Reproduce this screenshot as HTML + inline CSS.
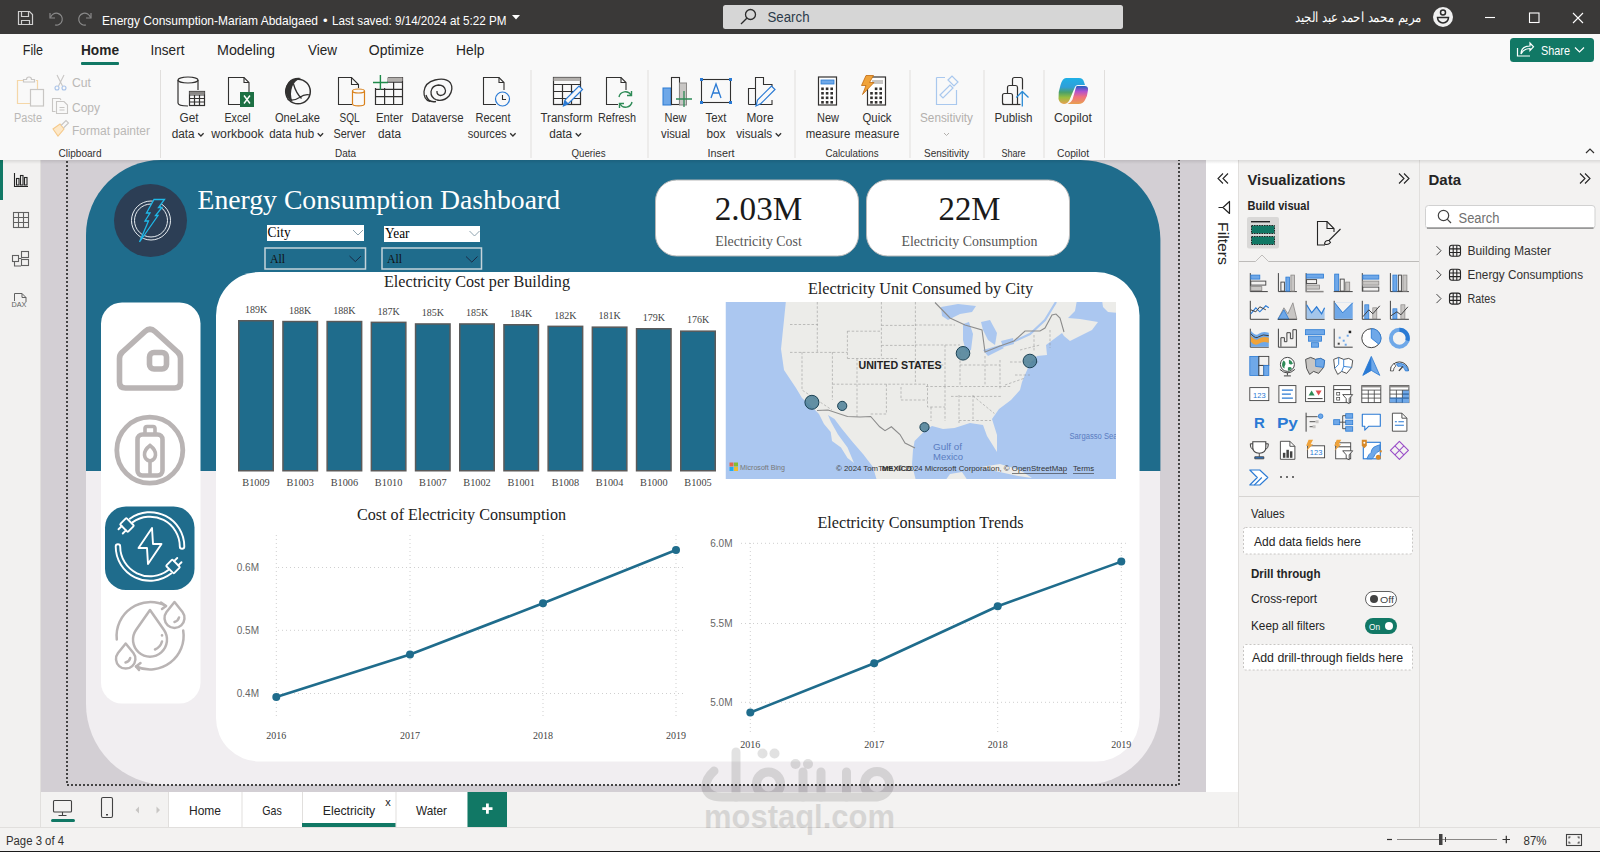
<!DOCTYPE html>
<html><head><meta charset="utf-8"><style>
html,body{margin:0;padding:0;width:1600px;height:852px;overflow:hidden;background:#f3f2f1;}
svg{display:block;}
text{white-space:pre;}
</style></head><body>
<svg width="1600" height="852" viewBox="0 0 1600 852">
<rect x="0" y="0" width="1600" height="852" fill="#f3f2f1"/>
<rect x="0" y="0" width="1600" height="34" fill="#3a3938"/>
<rect x="0" y="34" width="1600" height="126" fill="#f9f9f9"/>
<rect x="0" y="160" width="41" height="667" fill="#f2f1f0"/>
<rect x="40" y="160" width="1" height="667" fill="#e1dfdd"/>
<rect x="0" y="160" width="3" height="40" fill="#117865"/>
<rect x="41" y="160" width="1165" height="632" fill="#d3cfd4"/>
<rect x="1206" y="160" width="32" height="632" fill="#ffffff"/>
<rect x="1238" y="160" width="1" height="667" fill="#e1dfdd"/>
<rect x="1239" y="160" width="180" height="667" fill="#f3f2f1"/>
<rect x="1419" y="160" width="1" height="667" fill="#e1dfdd"/>
<rect x="1420" y="160" width="180" height="667" fill="#f3f2f1"/>
<rect x="41" y="792" width="1197" height="35" fill="#f3f2f1"/>
<rect x="0" y="827" width="1600" height="1" fill="#e1dfdd"/>
<rect x="0" y="828" width="1600" height="23" fill="#f3f2f1"/>
<rect x="0" y="851" width="1600" height="1" fill="#1a1a1a"/>
<path d="M86 300 V704 A81 81 0 0 0 167 785 H1083 A77 77 0 0 0 1160 708 V300 Z" fill="#f1eef1"/>
<path d="M86 471 V235 A75 75 0 0 1 161 160 H1080.4 A80 80 0 0 1 1160.4 240 V471 Z" fill="#1f6c8c"/>
<rect x="101" y="302.5" width="99.5" height="401" rx="21" fill="#ffffff"/>
<rect x="216" y="272" width="923.5" height="489.5" rx="43.5" fill="#ffffff"/>
<circle cx="150.5" cy="220.5" r="36.5" fill="#2c3e55"/>
<text x="197.5" y="208.5" font-size="27.7" fill="#ffffff" text-anchor="start" font-family='"Liberation Serif", serif' font-weight="normal" textLength="362.5" lengthAdjust="spacingAndGlyphs" >Energy Consumption Dashboard</text>
<g fill="none" stroke="#d0d0d0" stroke-width="1.2"><path d="M18.5 11.5 H29.5 L32.5 14.5 V24.5 H18.5 Z"/><path d="M21.5 11.5 V16.5 H28.5 V11.5"/><path d="M21.5 24.5 V20.5 H29.5 V24.5"/></g>
<g fill="none" stroke="#8a8a8a" stroke-width="1.2"><path d="M50 13 V18 H55"/><path d="M50.5 17.5 A6 6 0 1 1 55 25"/><path d="M91 13 V18 H86"/><path d="M90.5 17.5 A6 6 0 1 0 86 25"/></g>
<text x="102" y="24.5" font-size="13" fill="#ffffff" text-anchor="start" font-family='"Liberation Sans", sans-serif' font-weight="normal" textLength="216" lengthAdjust="spacingAndGlyphs" >Energy Consumption-Mariam Abdalgaed</text>
<text x="323" y="24.5" font-size="13" fill="#ffffff" text-anchor="start" font-family='"Liberation Sans", sans-serif' font-weight="normal" >•</text>
<text x="332" y="24.5" font-size="13" fill="#ffffff" text-anchor="start" font-family='"Liberation Sans", sans-serif' font-weight="normal" textLength="174.5" lengthAdjust="spacingAndGlyphs" >Last saved: 9/14/2024 at 5:22 PM</text>
<path d="M512 15 L520 15 L516 19.5 Z" fill="#ffffff"/>
<rect x="723" y="5" width="400" height="24" rx="2.5" fill="#d6d6d6"/>
<g fill="none" stroke="#2b2b2b" stroke-width="1.3"><circle cx="750.5" cy="14.5" r="5"/><path d="M746.8 18.2 L741 24"/></g>
<text x="767.5" y="22" font-size="14" fill="#2c3b4a" text-anchor="start" font-family='"Liberation Sans", sans-serif' font-weight="normal" textLength="42" lengthAdjust="spacingAndGlyphs" >Search</text>
<text x="1295" y="22" font-size="14" fill="#ffffff" font-family='"Liberation Sans", sans-serif' textLength="127" lengthAdjust="spacingAndGlyphs" style="unicode-bidi:plaintext">مريم محمد احمد عبد الجيد</text>
<circle cx="1443" cy="17" r="10" fill="#f0f0f0"/>
<g fill="none" stroke="#2b2b2b" stroke-width="1.5"><circle cx="1443" cy="12.5" r="2.5"/><path d="M1437.5 17.5 H1448.5 A5.5 5.5 0 0 1 1437.5 17.5 Z"/></g>
<g fill="none" stroke="#ffffff" stroke-width="1.1"><path d="M1485 17.5 H1495"/><rect x="1529.5" y="13" width="9.5" height="9.5"/><path d="M1573 13 L1583 23 M1583 13 L1573 23"/></g>
<text x="22.8" y="55.3" font-size="14" fill="#242424" text-anchor="start" font-family='"Liberation Sans", sans-serif' font-weight="normal" textLength="20.2" lengthAdjust="spacingAndGlyphs" >File</text>
<text x="81" y="55.3" font-size="14" fill="#242424" text-anchor="start" font-family='"Liberation Sans", sans-serif' font-weight="bold" textLength="38" lengthAdjust="spacingAndGlyphs" >Home</text>
<text x="150.6" y="55.3" font-size="14" fill="#242424" text-anchor="start" font-family='"Liberation Sans", sans-serif' font-weight="normal" textLength="33.8" lengthAdjust="spacingAndGlyphs" >Insert</text>
<text x="217" y="55.3" font-size="14" fill="#242424" text-anchor="start" font-family='"Liberation Sans", sans-serif' font-weight="normal" textLength="58" lengthAdjust="spacingAndGlyphs" >Modeling</text>
<text x="308" y="55.3" font-size="14" fill="#242424" text-anchor="start" font-family='"Liberation Sans", sans-serif' font-weight="normal" textLength="29" lengthAdjust="spacingAndGlyphs" >View</text>
<text x="368.8" y="55.3" font-size="14" fill="#242424" text-anchor="start" font-family='"Liberation Sans", sans-serif' font-weight="normal" textLength="55.2" lengthAdjust="spacingAndGlyphs" >Optimize</text>
<text x="456" y="55.3" font-size="14" fill="#242424" text-anchor="start" font-family='"Liberation Sans", sans-serif' font-weight="normal" textLength="28.4" lengthAdjust="spacingAndGlyphs" >Help</text>
<rect x="81" y="62" width="38" height="3" rx="1" fill="#117865"/>
<rect x="1510" y="38" width="84" height="24" rx="3.5" fill="#117865"/>
<g fill="none" stroke="#ffffff" stroke-width="1.2"><path d="M1517.5 48 V56 H1530"/><path d="M1521 54 C1521 48 1525 46 1530 46 V43 L1533.5 46.8 L1530 50.5 V48.5 C1526 48.5 1523 50 1521 54 Z"/></g>
<text x="1541" y="55" font-size="13" fill="#ffffff" text-anchor="start" font-family='"Liberation Sans", sans-serif' font-weight="normal" textLength="29" lengthAdjust="spacingAndGlyphs" >Share</text>
<path d="M1575 47.5 L1579.5 52 L1584 47.5" fill="none" stroke="#ffffff" stroke-width="1.2"/>
<rect x="160" y="70" width="1" height="88" fill="#e1dfdd"/>
<rect x="530.5" y="70" width="1" height="88" fill="#e1dfdd"/>
<rect x="647.5" y="70" width="1" height="88" fill="#e1dfdd"/>
<rect x="794.5" y="70" width="1" height="88" fill="#e1dfdd"/>
<rect x="909.5" y="70" width="1" height="88" fill="#e1dfdd"/>
<rect x="983.5" y="70" width="1" height="88" fill="#e1dfdd"/>
<rect x="1043.5" y="70" width="1" height="88" fill="#e1dfdd"/>
<rect x="1104" y="70" width="1" height="88" fill="#e1dfdd"/>
<text x="80" y="157" font-size="11" fill="#323130" text-anchor="middle" font-family='"Liberation Sans", sans-serif' font-weight="normal" textLength="43" lengthAdjust="spacingAndGlyphs" >Clipboard</text>
<text x="345.5" y="157" font-size="11" fill="#323130" text-anchor="middle" font-family='"Liberation Sans", sans-serif' font-weight="normal" textLength="21" lengthAdjust="spacingAndGlyphs" >Data</text>
<text x="588.5" y="157" font-size="11" fill="#323130" text-anchor="middle" font-family='"Liberation Sans", sans-serif' font-weight="normal" textLength="34" lengthAdjust="spacingAndGlyphs" >Queries</text>
<text x="721" y="157" font-size="11" fill="#323130" text-anchor="middle" font-family='"Liberation Sans", sans-serif' font-weight="normal" textLength="27" lengthAdjust="spacingAndGlyphs" >Insert</text>
<text x="852" y="157" font-size="11" fill="#323130" text-anchor="middle" font-family='"Liberation Sans", sans-serif' font-weight="normal" textLength="53" lengthAdjust="spacingAndGlyphs" >Calculations</text>
<text x="946.5" y="157" font-size="11" fill="#323130" text-anchor="middle" font-family='"Liberation Sans", sans-serif' font-weight="normal" textLength="45" lengthAdjust="spacingAndGlyphs" >Sensitivity</text>
<text x="1013.5" y="157" font-size="11" fill="#323130" text-anchor="middle" font-family='"Liberation Sans", sans-serif' font-weight="normal" textLength="24" lengthAdjust="spacingAndGlyphs" >Share</text>
<text x="1073" y="157" font-size="11" fill="#323130" text-anchor="middle" font-family='"Liberation Sans", sans-serif' font-weight="normal" textLength="32" lengthAdjust="spacingAndGlyphs" >Copilot</text>
<path d="M1586 153 L1590 149 L1594 153" fill="none" stroke="#323130" stroke-width="1.2"/>
<text x="28" y="122" font-size="12" fill="#bab8b6" text-anchor="middle" font-family='"Liberation Sans", sans-serif' font-weight="normal" textLength="28" lengthAdjust="spacingAndGlyphs" >Paste</text>
<text x="72" y="87" font-size="12" fill="#bab8b6" text-anchor="start" font-family='"Liberation Sans", sans-serif' font-weight="normal" textLength="19" lengthAdjust="spacingAndGlyphs" >Cut</text>
<text x="72" y="111.5" font-size="12" fill="#bab8b6" text-anchor="start" font-family='"Liberation Sans", sans-serif' font-weight="normal" textLength="28" lengthAdjust="spacingAndGlyphs" >Copy</text>
<text x="72" y="135" font-size="12" fill="#bab8b6" text-anchor="start" font-family='"Liberation Sans", sans-serif' font-weight="normal" textLength="78" lengthAdjust="spacingAndGlyphs" >Format painter</text>
<text x="189" y="122" font-size="12" fill="#323130" text-anchor="middle" font-family='"Liberation Sans", sans-serif' font-weight="normal" textLength="19" lengthAdjust="spacingAndGlyphs" >Get</text>
<text x="183.2" y="138" font-size="12" fill="#323130" text-anchor="middle" font-family='"Liberation Sans", sans-serif' font-weight="normal" textLength="23" lengthAdjust="spacingAndGlyphs" >data</text>
<path d="M198.2 133.3 L200.89999999999998 136 L203.6 133.3" fill="none" stroke="#323130" stroke-width="1.3"/>
<text x="237.5" y="122" font-size="12" fill="#323130" text-anchor="middle" font-family='"Liberation Sans", sans-serif' font-weight="normal" textLength="26" lengthAdjust="spacingAndGlyphs" >Excel</text>
<text x="237.5" y="138" font-size="12" fill="#323130" text-anchor="middle" font-family='"Liberation Sans", sans-serif' font-weight="normal" textLength="52.5" lengthAdjust="spacingAndGlyphs" >workbook</text>
<text x="297.5" y="122" font-size="12" fill="#323130" text-anchor="middle" font-family='"Liberation Sans", sans-serif' font-weight="normal" textLength="45" lengthAdjust="spacingAndGlyphs" >OneLake</text>
<text x="291.7" y="138" font-size="12" fill="#323130" text-anchor="middle" font-family='"Liberation Sans", sans-serif' font-weight="normal" textLength="45" lengthAdjust="spacingAndGlyphs" >data hub</text>
<path d="M317.7 133.3 L320.4 136 L323.09999999999997 133.3" fill="none" stroke="#323130" stroke-width="1.3"/>
<text x="349.5" y="122" font-size="12" fill="#323130" text-anchor="middle" font-family='"Liberation Sans", sans-serif' font-weight="normal" textLength="20" lengthAdjust="spacingAndGlyphs" >SQL</text>
<text x="349.5" y="138" font-size="12" fill="#323130" text-anchor="middle" font-family='"Liberation Sans", sans-serif' font-weight="normal" textLength="32" lengthAdjust="spacingAndGlyphs" >Server</text>
<text x="389.5" y="122" font-size="12" fill="#323130" text-anchor="middle" font-family='"Liberation Sans", sans-serif' font-weight="normal" textLength="27" lengthAdjust="spacingAndGlyphs" >Enter</text>
<text x="389.5" y="138" font-size="12" fill="#323130" text-anchor="middle" font-family='"Liberation Sans", sans-serif' font-weight="normal" textLength="23" lengthAdjust="spacingAndGlyphs" >data</text>
<text x="437.5" y="122" font-size="12" fill="#323130" text-anchor="middle" font-family='"Liberation Sans", sans-serif' font-weight="normal" textLength="52" lengthAdjust="spacingAndGlyphs" >Dataverse</text>
<text x="493" y="122" font-size="12" fill="#323130" text-anchor="middle" font-family='"Liberation Sans", sans-serif' font-weight="normal" textLength="35" lengthAdjust="spacingAndGlyphs" >Recent</text>
<text x="487.2" y="138" font-size="12" fill="#323130" text-anchor="middle" font-family='"Liberation Sans", sans-serif' font-weight="normal" textLength="39" lengthAdjust="spacingAndGlyphs" >sources</text>
<path d="M510.2 133.3 L512.9 136 L515.6 133.3" fill="none" stroke="#323130" stroke-width="1.3"/>
<text x="566.5" y="122" font-size="12" fill="#323130" text-anchor="middle" font-family='"Liberation Sans", sans-serif' font-weight="normal" textLength="52" lengthAdjust="spacingAndGlyphs" >Transform</text>
<text x="560.7" y="138" font-size="12" fill="#323130" text-anchor="middle" font-family='"Liberation Sans", sans-serif' font-weight="normal" textLength="23" lengthAdjust="spacingAndGlyphs" >data</text>
<path d="M575.7 133.3 L578.4000000000001 136 L581.1 133.3" fill="none" stroke="#323130" stroke-width="1.3"/>
<text x="617" y="122" font-size="12" fill="#323130" text-anchor="middle" font-family='"Liberation Sans", sans-serif' font-weight="normal" textLength="38" lengthAdjust="spacingAndGlyphs" >Refresh</text>
<text x="675.5" y="122" font-size="12" fill="#323130" text-anchor="middle" font-family='"Liberation Sans", sans-serif' font-weight="normal" textLength="22" lengthAdjust="spacingAndGlyphs" >New</text>
<text x="675.5" y="138" font-size="12" fill="#323130" text-anchor="middle" font-family='"Liberation Sans", sans-serif' font-weight="normal" textLength="29" lengthAdjust="spacingAndGlyphs" >visual</text>
<text x="716" y="122" font-size="12" fill="#323130" text-anchor="middle" font-family='"Liberation Sans", sans-serif' font-weight="normal" textLength="21" lengthAdjust="spacingAndGlyphs" >Text</text>
<text x="716" y="138" font-size="12" fill="#323130" text-anchor="middle" font-family='"Liberation Sans", sans-serif' font-weight="normal" textLength="19" lengthAdjust="spacingAndGlyphs" >box</text>
<text x="760" y="122" font-size="12" fill="#323130" text-anchor="middle" font-family='"Liberation Sans", sans-serif' font-weight="normal" textLength="27" lengthAdjust="spacingAndGlyphs" >More</text>
<text x="754.2" y="138" font-size="12" fill="#323130" text-anchor="middle" font-family='"Liberation Sans", sans-serif' font-weight="normal" textLength="36" lengthAdjust="spacingAndGlyphs" >visuals</text>
<path d="M775.7 133.3 L778.4000000000001 136 L781.1 133.3" fill="none" stroke="#323130" stroke-width="1.3"/>
<text x="828" y="122" font-size="12" fill="#323130" text-anchor="middle" font-family='"Liberation Sans", sans-serif' font-weight="normal" textLength="22" lengthAdjust="spacingAndGlyphs" >New</text>
<text x="828" y="138" font-size="12" fill="#323130" text-anchor="middle" font-family='"Liberation Sans", sans-serif' font-weight="normal" textLength="44.5" lengthAdjust="spacingAndGlyphs" >measure</text>
<text x="877" y="122" font-size="12" fill="#323130" text-anchor="middle" font-family='"Liberation Sans", sans-serif' font-weight="normal" textLength="29" lengthAdjust="spacingAndGlyphs" >Quick</text>
<text x="877" y="138" font-size="12" fill="#323130" text-anchor="middle" font-family='"Liberation Sans", sans-serif' font-weight="normal" textLength="44.5" lengthAdjust="spacingAndGlyphs" >measure</text>
<text x="946.5" y="122" font-size="12" fill="#b3b0ad" text-anchor="middle" font-family='"Liberation Sans", sans-serif' font-weight="normal" textLength="53" lengthAdjust="spacingAndGlyphs" >Sensitivity</text>
<path d="M944 133 L946.5 135.5 L949 133" fill="none" stroke="#b3b0ad" stroke-width="1"/>
<text x="1013.5" y="122" font-size="12" fill="#323130" text-anchor="middle" font-family='"Liberation Sans", sans-serif' font-weight="normal" textLength="38" lengthAdjust="spacingAndGlyphs" >Publish</text>
<text x="1073" y="122" font-size="12" fill="#323130" text-anchor="middle" font-family='"Liberation Sans", sans-serif' font-weight="normal" textLength="38" lengthAdjust="spacingAndGlyphs" >Copilot</text>
<g fill="none" stroke-width="1.2"><path d="M23 80.5 H17.5 V103.5 H30" stroke="#f5d7a8"/><path d="M36 80.5 H37.5 V90" stroke="#f5d7a8"/><path d="M23.5 82 V79.5 H26.5 A2.5 2.5 0 0 1 31.5 79.5 H34.5 V82 Z" stroke="#c8c6c4"/><rect x="30.5" y="89.5" width="13" height="16.5" stroke="#c8c6c4"/></g>
<g fill="none" stroke-width="1.1"><path d="M57 75 L62.5 86 M64 75 L58.5 86" stroke="#c8c6c4"/><circle cx="57" cy="88" r="2" stroke="#a9c3e8"/><circle cx="64" cy="88" r="2" stroke="#a9c3e8"/></g>
<g fill="none" stroke="#c8c6c4" stroke-width="1.1"><path d="M55.5 111.5 H52.5 V98.5 H60 L61 100"/><path d="M56.5 101.5 H64 L67.5 105 V113.5 H56.5 Z"/><path d="M59.5 107.5 H64.5 M59.5 110 H64.5"/></g>
<g fill="none" stroke-width="1.1"><path d="M53 129 L60 124 L64 129 L58 136 Z" stroke="#f5c98a" fill="#fde8c8"/><path d="M61 125.5 L66 120.5 L68.5 123 L63.5 128" stroke="#c8c6c4"/></g>
<g fill="none" stroke="#323130" stroke-width="1.2"><ellipse cx="188" cy="80" rx="10" ry="3"/><path d="M178 80 V103 C178 105 182 106 188 106"/><path d="M198 80 V90"/><rect x="189.5" y="91.5" width="15" height="14" fill="#f9f9f9"/><path d="M189.5 95 H204.5 M189.5 98.5 H204.5 M189.5 102 H204.5 M194.5 95 V105.5 M199.5 95 V105.5"/></g>
<rect x="189.5" y="91.5" width="15" height="3" fill="#8a8886"/>
<g fill="none" stroke="#323130" stroke-width="1.1"><path d="M240 104.5 H228.5 V77.5 H244 L249 82.5 V92"/><path d="M244 77.5 V82.5 H249"/></g>
<rect x="240" y="92" width="14" height="15" fill="#1d7044"/>
<path d="M244 95.5 L250 103.5 M250 95.5 L244 103.5" stroke="#ffffff" stroke-width="1.4"/>
<circle cx="298" cy="91.5" r="12.3" fill="none" stroke="#323130" stroke-width="1.5"/>
<path d="M288.5 82 Q293 77 301 78 Q295 80.5 292.5 86 Q289.5 94 292.5 101.5 Q286 98.5 285.6 91 Q285.8 85.5 288.5 82 Z" fill="#323130"/>
<path d="M293.5 84 Q296 93 301.5 98.5 M287.5 99.5 Q293.5 101.5 299.5 97.5 Q305 93.5 310 95" fill="none" stroke="#323130" stroke-width="1.3"/>
<g fill="none" stroke="#323130" stroke-width="1.1"><path d="M352 104.5 H338.5 V77.5 H351.5 L358.5 84.5 V88"/><path d="M351.5 77.5 V84.5 H358.5"/></g>
<g fill="#f9f9f9" stroke="#d9801a" stroke-width="1.2"><path d="M352.5 91 V104 C352.5 106.5 364.5 106.5 364.5 104 V91"/><ellipse cx="358.5" cy="91" rx="6" ry="2"/></g>
<g fill="none" stroke="#323130" stroke-width="1.2"><path d="M375.5 88 V104.5 H402.5 V77.5 H388"/><path d="M375.5 89.4 H402.5 M375.5 96.7 H402.5 M384.6 82 V104.5 M393.6 82 V104.5 M384.6 82.1 H402.5"/></g>
<rect x="384.6" y="77.5" width="17.9" height="3.6" fill="#b3b0ad"/>
<rect x="376" y="74" width="11" height="14" fill="#f9f9f9"/>
<path d="M380.4 75 V90 M373 82.5 H388" stroke="#1e8a4a" stroke-width="1.4"/>
<path d="M430 101.5 Q423.5 99.5 424 91.5 Q425 82.5 435 80 Q446 77.5 450.5 83 Q454 89 449 96 Q444 101.5 437 100 Q430.5 98 431 91.5 Q432 85.5 438.5 85 Q444.5 85 445.5 90.5 Q445.5 95 440.5 95.5 Q436.5 95 437 91" fill="none" stroke="#323130" stroke-width="1.3"/>
<path d="M426 95 Q428 103 436 101.5" fill="none" stroke="#323130" stroke-width="1.3"/>
<g fill="none" stroke="#323130" stroke-width="1.1"><path d="M496 104.5 H483.5 V77.5 H499 L504 82.5 V90"/><path d="M499 77.5 V82.5 H504"/></g>
<circle cx="502.5" cy="99" r="7" fill="#f9f9f9" stroke="#2a7ad4" stroke-width="1.2"/>
<path d="M502.5 95 V99.5 H506" fill="none" stroke="#323130" stroke-width="1.1"/>
<g fill="none" stroke="#323130" stroke-width="1.2"><rect x="553.5" y="77.5" width="27" height="27"/><path d="M553.5 84.5 H580.5 M553.5 91.5 H580.5 M553.5 98.5 H580.5 M562.5 84.5 V104.5 M571.5 84.5 V104.5"/></g>
<rect x="553.5" y="77.5" width="27" height="3.5" fill="#b3b0ad"/>
<path d="M563.5 106 L565 100 L579 86 L582.5 89.5 L568.5 103.5 Z" fill="#f9f9f9" stroke="#2a7ad4" stroke-width="1.2"/>
<path d="M563.5 106 L565 100 L568.5 103.5 Z" fill="#2a7ad4"/>
<g fill="none" stroke="#323130" stroke-width="1.1"><path d="M618 104.5 H606.5 V77.5 H621 L626 82.5 V90"/><path d="M621 77.5 V82.5 H626"/></g>
<g fill="none" stroke="#2e8b57" stroke-width="1.4"><path d="M619 97 A6.5 6.5 0 0 1 631 95"/><path d="M632 102 A6.5 6.5 0 0 1 620 104"/><path d="M631.5 91 V95.5 H627"/><path d="M619.5 108 V103.5 H624"/></g>
<rect x="663" y="88" width="8" height="17" fill="#6fa8e8" stroke="#2a7ad4" stroke-width="1"/>
<rect x="671.5" y="77.5" width="8" height="27" fill="#f9f9f9" stroke="#323130" stroke-width="1.1"/>
<rect x="679.5" y="83" width="7" height="22" fill="#c8c6c4" stroke="#8a8886" stroke-width="1"/>
<path d="M684 91 V107 M676 99 H692" stroke="#2e8b57" stroke-width="1.3"/>
<rect x="701.5" y="79.5" width="29" height="23" fill="none" stroke="#323130" stroke-width="1.1"/>
<rect x="700.0" y="78.0" width="3" height="3" fill="#2a7ad4"/>
<rect x="729.0" y="78.0" width="3" height="3" fill="#2a7ad4"/>
<rect x="700.0" y="101.0" width="3" height="3" fill="#2a7ad4"/>
<rect x="729.0" y="101.0" width="3" height="3" fill="#2a7ad4"/>
<path d="M711 98 L716 84 L721 98 M712.8 93 H719.2" fill="none" stroke="#2a7ad4" stroke-width="1.3"/>
<g fill="none" stroke="#323130" stroke-width="1.1"><path d="M748.5 104.5 V88.5 H755.5 M755.5 104.5 V77.5 H763.5 V85 M763.5 84.5 H772 V92 M772 100 V104.5 H748.5"/></g>
<path d="M756 106 L757.5 100 L771.5 86 L775 89.5 L761 103.5 Z" fill="#f9f9f9" stroke="#2a7ad4" stroke-width="1.2"/>
<rect x="818.5" y="77" width="18" height="28" fill="#fff" stroke="#323130" stroke-width="1.2"/>
<rect x="821" y="80" width="13" height="4" fill="#6fa8e8" stroke="#2a7ad4" stroke-width="0.8"/>
<rect x="821.2" y="87.5" width="2.6" height="2.6" fill="#323130"/>
<rect x="825.8000000000001" y="87.5" width="2.6" height="2.6" fill="#323130"/>
<rect x="830.4000000000001" y="87.5" width="2.6" height="2.6" fill="#323130"/>
<rect x="821.2" y="92.0" width="2.6" height="2.6" fill="#323130"/>
<rect x="825.8000000000001" y="92.0" width="2.6" height="2.6" fill="#323130"/>
<rect x="830.4000000000001" y="92.0" width="2.6" height="2.6" fill="#323130"/>
<rect x="821.2" y="96.5" width="2.6" height="2.6" fill="#323130"/>
<rect x="825.8000000000001" y="96.5" width="2.6" height="2.6" fill="#323130"/>
<rect x="830.4000000000001" y="96.5" width="2.6" height="2.6" fill="#323130"/>
<rect x="821.2" y="101.0" width="2.6" height="2.6" fill="#323130"/>
<rect x="825.8000000000001" y="101.0" width="2.6" height="2.6" fill="#323130"/>
<rect x="830.4000000000001" y="101.0" width="2.6" height="2.6" fill="#323130"/>
<rect x="867.5" y="77" width="18" height="28" fill="#fff" stroke="#323130" stroke-width="1.2"/>
<rect x="872" y="80" width="11" height="4" fill="#c8c6c4"/>
<rect x="874.8000000000001" y="87.5" width="2.6" height="2.6" fill="#323130"/>
<rect x="879.4000000000001" y="87.5" width="2.6" height="2.6" fill="#323130"/>
<rect x="870.2" y="92.0" width="2.6" height="2.6" fill="#323130"/>
<rect x="874.8000000000001" y="92.0" width="2.6" height="2.6" fill="#323130"/>
<rect x="879.4000000000001" y="92.0" width="2.6" height="2.6" fill="#323130"/>
<rect x="870.2" y="96.5" width="2.6" height="2.6" fill="#323130"/>
<rect x="874.8000000000001" y="96.5" width="2.6" height="2.6" fill="#323130"/>
<rect x="879.4000000000001" y="96.5" width="2.6" height="2.6" fill="#323130"/>
<rect x="870.2" y="101.0" width="2.6" height="2.6" fill="#323130"/>
<rect x="874.8000000000001" y="101.0" width="2.6" height="2.6" fill="#323130"/>
<rect x="879.4000000000001" y="101.0" width="2.6" height="2.6" fill="#323130"/>
<path d="M866 75.5 L873.5 75.5 L869.5 82.5 L874 82.5 L862.5 94.5 L866 85.5 L861.5 85.5 Z" fill="#f0a33a" stroke="#c06a10" stroke-width="0.8"/>
<g fill="none" stroke="#a9c8ee" stroke-width="1.2"><path d="M936.5 77.5 H945 M956.5 90 V104.5 H936.5 V77.5"/><path d="M940 95 L950 85 L953 88 L943 98 Z"/><path d="M948 80 L952 76 L958 82 L954 86 Z"/></g>
<g fill="none" stroke="#323130" stroke-width="1.2"><path d="M1012.5 104.5 H1004.5 Q1002.5 104.5 1002.5 102.5 V95.5 Q1002.5 93.5 1004.5 93.5 H1010.5 Q1012.5 93.5 1012.5 95.5 V104.5"/><path d="M1007.5 93.5 V87.5 Q1007.5 85.5 1009.5 85.5 H1015.5 Q1017.5 85.5 1017.5 87.5 V104.5"/><path d="M1012.5 85.5 V79.5 Q1012.5 77.5 1014.5 77.5 H1020.5 Q1022.5 77.5 1022.5 79.5 V89.5"/><path d="M1002.5 104.5 H1020.5"/></g>
<path d="M1022.3 106.5 V91.5 M1016.3 97.5 L1022.3 91.5 L1028.5 97.5" fill="none" stroke="#2a8ad4" stroke-width="1.3"/>
<defs><linearGradient id="cpa" x1="0" y1="0" x2="0" y2="1"><stop offset="0" stop-color="#1fb0e6"/><stop offset="0.35" stop-color="#2f9fd8"/><stop offset="0.55" stop-color="#4aa06a"/><stop offset="0.75" stop-color="#98bd40"/><stop offset="1" stop-color="#e8a050"/></linearGradient><linearGradient id="cpb" x1="0" y1="0" x2="0" y2="1"><stop offset="0" stop-color="#1e60c0"/><stop offset="0.3" stop-color="#b050d0"/><stop offset="0.6" stop-color="#f07080"/><stop offset="1" stop-color="#e8a050"/></linearGradient></defs>
<path d="M1066 78 H1079 Q1083 78 1084 82 L1085 85 H1078 Q1075.5 85 1074.5 88 L1069.5 100 Q1067.5 104 1064 104 Q1059.5 103.5 1058.5 99 Q1058 92 1060.5 85 Q1062.5 78 1066 78 Z" fill="url(#cpa)"/>
<path d="M1077 86 H1084.5 Q1088.5 86 1088 90 Q1087.5 96 1085 100 Q1083 104 1078.5 104 H1067.5 Q1071 103 1072.5 99.5 L1075.5 89 Q1076 86 1077 86 Z" fill="url(#cpb)"/>
<g fill="none" stroke="#e8eef2" stroke-width="1"><circle cx="151" cy="220.5" r="19.5"/><circle cx="151" cy="220.5" r="16.5"/></g>
<path d="M154 199.5 L164.5 199.5 L158.5 207.5 L162 207.5 L155.5 215.5 L158 215.5 L139.5 242 L148.5 221 L145 221 L150 213 L146.5 213 Z" fill="#2c3e55" stroke="#1fb8e8" stroke-width="1.3" stroke-linejoin="miter"/>
<rect x="267" y="225" width="97" height="16" fill="#ffffff"/>
<text x="267.6" y="237" font-size="14" fill="#000000" text-anchor="start" font-family='"Liberation Serif", serif' font-weight="normal" textLength="23" lengthAdjust="spacingAndGlyphs" >City</text>
<path d="M353 230 L358 235 L363 230" fill="none" stroke="#8fa4b0" stroke-width="1"/>
<rect x="384" y="226" width="96" height="16" fill="#ffffff"/>
<text x="385" y="238" font-size="14" fill="#000000" text-anchor="start" font-family='"Liberation Serif", serif' font-weight="normal" textLength="24.5" lengthAdjust="spacingAndGlyphs" >Year</text>
<path d="M469.5 231 L474.5 236 L479.5 231" fill="none" stroke="#8fa4b0" stroke-width="1"/>
<rect x="265" y="248" width="100.5" height="21" fill="none" stroke="#c5d3da" stroke-width="1.5"/>
<rect x="382" y="248" width="99.5" height="21" fill="none" stroke="#c5d3da" stroke-width="1.5"/>
<text x="270" y="262.6" font-size="13" fill="#111111" text-anchor="start" font-family='"Liberation Serif", serif' font-weight="normal" textLength="15" lengthAdjust="spacingAndGlyphs" >All</text>
<text x="387" y="263" font-size="13" fill="#111111" text-anchor="start" font-family='"Liberation Serif", serif' font-weight="normal" textLength="15" lengthAdjust="spacingAndGlyphs" >All</text>
<path d="M349.5 256 L355.3 261.6 L361 256" fill="none" stroke="#1a2a45" stroke-width="1"/>
<path d="M466 256.5 L471.8 262.1 L477.5 256.5" fill="none" stroke="#1a2a45" stroke-width="1"/>
<rect x="655.5" y="180" width="203" height="76" rx="21" fill="#ffffff" stroke="#b7b7b7" stroke-width="1"/>
<text x="758.5" y="219.5" font-size="33.2" fill="#1a1a1a" text-anchor="middle" font-family='"Liberation Serif", serif' font-weight="normal" textLength="87.7" lengthAdjust="spacingAndGlyphs" >2.03M</text>
<text x="758.5" y="246" font-size="14" fill="#555555" text-anchor="middle" font-family='"Liberation Serif", serif' font-weight="normal" textLength="86.6" lengthAdjust="spacingAndGlyphs" >Electricity Cost</text>
<rect x="866.5" y="180" width="203" height="76" rx="21" fill="#ffffff" stroke="#b7b7b7" stroke-width="1"/>
<text x="969.5" y="219.5" font-size="33.2" fill="#1a1a1a" text-anchor="middle" font-family='"Liberation Serif", serif' font-weight="normal" textLength="62" lengthAdjust="spacingAndGlyphs" >22M</text>
<text x="969.5" y="246" font-size="14" fill="#555555" text-anchor="middle" font-family='"Liberation Serif", serif' font-weight="normal" textLength="136" lengthAdjust="spacingAndGlyphs" >Electricity Consumption</text>
<text x="477" y="287" font-size="16" fill="#222222" text-anchor="middle" font-family='"Liberation Serif", serif' font-weight="normal" textLength="186" lengthAdjust="spacingAndGlyphs" >Electricity Cost per Building</text>
<rect x="238.75" y="320.74760000000003" width="34.5" height="150.0024" fill="#1f6c8c" stroke="#5a5a5a" stroke-width="1.5"/>
<text x="256.0" y="312.99760000000003" font-size="10" fill="#444444" text-anchor="middle" font-family='"Liberation Serif", serif' font-weight="normal" >189K</text>
<text x="256.0" y="486" font-size="10.3" fill="#444444" text-anchor="middle" font-family='"Liberation Serif", serif' font-weight="normal" >B1009</text>
<rect x="282.95" y="321.54920000000004" width="34.5" height="149.2008" fill="#1f6c8c" stroke="#5a5a5a" stroke-width="1.5"/>
<text x="300.2" y="313.79920000000004" font-size="10" fill="#444444" text-anchor="middle" font-family='"Liberation Serif", serif' font-weight="normal" >188K</text>
<text x="300.2" y="486" font-size="10.3" fill="#444444" text-anchor="middle" font-family='"Liberation Serif", serif' font-weight="normal" >B1003</text>
<rect x="327.15" y="321.54920000000004" width="34.5" height="149.2008" fill="#1f6c8c" stroke="#5a5a5a" stroke-width="1.5"/>
<text x="344.4" y="313.79920000000004" font-size="10" fill="#444444" text-anchor="middle" font-family='"Liberation Serif", serif' font-weight="normal" >188K</text>
<text x="344.4" y="486" font-size="10.3" fill="#444444" text-anchor="middle" font-family='"Liberation Serif", serif' font-weight="normal" >B1006</text>
<rect x="371.35" y="322.3508" width="34.5" height="148.3992" fill="#1f6c8c" stroke="#5a5a5a" stroke-width="1.5"/>
<text x="388.6" y="314.6008" font-size="10" fill="#444444" text-anchor="middle" font-family='"Liberation Serif", serif' font-weight="normal" >187K</text>
<text x="388.6" y="486" font-size="10.3" fill="#444444" text-anchor="middle" font-family='"Liberation Serif", serif' font-weight="normal" >B1010</text>
<rect x="415.55" y="323.954" width="34.5" height="146.796" fill="#1f6c8c" stroke="#5a5a5a" stroke-width="1.5"/>
<text x="432.8" y="316.204" font-size="10" fill="#444444" text-anchor="middle" font-family='"Liberation Serif", serif' font-weight="normal" >185K</text>
<text x="432.8" y="486" font-size="10.3" fill="#444444" text-anchor="middle" font-family='"Liberation Serif", serif' font-weight="normal" >B1007</text>
<rect x="459.75" y="323.954" width="34.5" height="146.796" fill="#1f6c8c" stroke="#5a5a5a" stroke-width="1.5"/>
<text x="477.0" y="316.204" font-size="10" fill="#444444" text-anchor="middle" font-family='"Liberation Serif", serif' font-weight="normal" >185K</text>
<text x="477.0" y="486" font-size="10.3" fill="#444444" text-anchor="middle" font-family='"Liberation Serif", serif' font-weight="normal" >B1002</text>
<rect x="503.95000000000005" y="324.7556" width="34.5" height="145.99439999999998" fill="#1f6c8c" stroke="#5a5a5a" stroke-width="1.5"/>
<text x="521.2" y="317.0056" font-size="10" fill="#444444" text-anchor="middle" font-family='"Liberation Serif", serif' font-weight="normal" >184K</text>
<text x="521.2" y="486" font-size="10.3" fill="#444444" text-anchor="middle" font-family='"Liberation Serif", serif' font-weight="normal" >B1001</text>
<rect x="548.1500000000001" y="326.3588" width="34.5" height="144.3912" fill="#1f6c8c" stroke="#5a5a5a" stroke-width="1.5"/>
<text x="565.4000000000001" y="318.6088" font-size="10" fill="#444444" text-anchor="middle" font-family='"Liberation Serif", serif' font-weight="normal" >182K</text>
<text x="565.4000000000001" y="486" font-size="10.3" fill="#444444" text-anchor="middle" font-family='"Liberation Serif", serif' font-weight="normal" >B1008</text>
<rect x="592.35" y="327.1604" width="34.5" height="143.5896" fill="#1f6c8c" stroke="#5a5a5a" stroke-width="1.5"/>
<text x="609.6" y="319.4104" font-size="10" fill="#444444" text-anchor="middle" font-family='"Liberation Serif", serif' font-weight="normal" >181K</text>
<text x="609.6" y="486" font-size="10.3" fill="#444444" text-anchor="middle" font-family='"Liberation Serif", serif' font-weight="normal" >B1004</text>
<rect x="636.55" y="328.7636" width="34.5" height="141.9864" fill="#1f6c8c" stroke="#5a5a5a" stroke-width="1.5"/>
<text x="653.8" y="321.0136" font-size="10" fill="#444444" text-anchor="middle" font-family='"Liberation Serif", serif' font-weight="normal" >179K</text>
<text x="653.8" y="486" font-size="10.3" fill="#444444" text-anchor="middle" font-family='"Liberation Serif", serif' font-weight="normal" >B1000</text>
<rect x="680.75" y="331.1684" width="34.5" height="139.5816" fill="#1f6c8c" stroke="#5a5a5a" stroke-width="1.5"/>
<text x="698.0" y="323.4184" font-size="10" fill="#444444" text-anchor="middle" font-family='"Liberation Serif", serif' font-weight="normal" >176K</text>
<text x="698.0" y="486" font-size="10.3" fill="#444444" text-anchor="middle" font-family='"Liberation Serif", serif' font-weight="normal" >B1005</text>
<text x="461.5" y="520" font-size="16" fill="#222222" text-anchor="middle" font-family='"Liberation Serif", serif' font-weight="normal" textLength="209" lengthAdjust="spacingAndGlyphs" >Cost of Electricity Consumption</text>
<g stroke="#cfcfcf" stroke-width="1" stroke-dasharray="1 3" fill="none"><path d="M276.3 535 V719"/><path d="M410 535 V719"/><path d="M543 535 V719"/><path d="M676 535 V719"/><path d="M278 567.5 H683"/><path d="M278 630.3 H683"/><path d="M278 693.5 H683"/></g>
<text x="259" y="571.0" font-size="10" fill="#666666" text-anchor="end" font-family='"Liberation Sans", sans-serif' font-weight="normal" >0.6M</text>
<text x="259" y="633.8" font-size="10" fill="#666666" text-anchor="end" font-family='"Liberation Sans", sans-serif' font-weight="normal" >0.5M</text>
<text x="259" y="697.0" font-size="10" fill="#666666" text-anchor="end" font-family='"Liberation Sans", sans-serif' font-weight="normal" >0.4M</text>
<text x="276.3" y="739" font-size="10" fill="#444444" text-anchor="middle" font-family='"Liberation Serif", serif' font-weight="normal" >2016</text>
<text x="410" y="739" font-size="10" fill="#444444" text-anchor="middle" font-family='"Liberation Serif", serif' font-weight="normal" >2017</text>
<text x="543" y="739" font-size="10" fill="#444444" text-anchor="middle" font-family='"Liberation Serif", serif' font-weight="normal" >2018</text>
<text x="676" y="739" font-size="10" fill="#444444" text-anchor="middle" font-family='"Liberation Serif", serif' font-weight="normal" >2019</text>
<path d="M276.3 697 L410 654.5 L543 603.3 L676 550" fill="none" stroke="#1f6c8c" stroke-width="2.6" stroke-linejoin="round"/>
<circle cx="276.3" cy="697" r="4" fill="#1f6c8c"/>
<circle cx="410" cy="654.5" r="4" fill="#1f6c8c"/>
<circle cx="543" cy="603.3" r="4" fill="#1f6c8c"/>
<circle cx="676" cy="550" r="4" fill="#1f6c8c"/>
<text x="920.5" y="528" font-size="16" fill="#222222" text-anchor="middle" font-family='"Liberation Serif", serif' font-weight="normal" textLength="206" lengthAdjust="spacingAndGlyphs" >Electricity Consumption Trends</text>
<g stroke="#cfcfcf" stroke-width="1" stroke-dasharray="1 3" fill="none"><path d="M750.3 543 V735"/><path d="M874.2 543 V735"/><path d="M997.7 543 V735"/><path d="M1121.3 543 V735"/><path d="M741 543.3 H1129"/><path d="M741 623.5 H1129"/><path d="M741 702.3 H1129"/></g>
<text x="732.5" y="546.8" font-size="10" fill="#666666" text-anchor="end" font-family='"Liberation Sans", sans-serif' font-weight="normal" >6.0M</text>
<text x="732.5" y="627.0" font-size="10" fill="#666666" text-anchor="end" font-family='"Liberation Sans", sans-serif' font-weight="normal" >5.5M</text>
<text x="732.5" y="705.8" font-size="10" fill="#666666" text-anchor="end" font-family='"Liberation Sans", sans-serif' font-weight="normal" >5.0M</text>
<text x="750.3" y="747.5" font-size="10" fill="#444444" text-anchor="middle" font-family='"Liberation Serif", serif' font-weight="normal" >2016</text>
<text x="874.2" y="747.5" font-size="10" fill="#444444" text-anchor="middle" font-family='"Liberation Serif", serif' font-weight="normal" >2017</text>
<text x="997.7" y="747.5" font-size="10" fill="#444444" text-anchor="middle" font-family='"Liberation Serif", serif' font-weight="normal" >2018</text>
<text x="1121.3" y="747.5" font-size="10" fill="#444444" text-anchor="middle" font-family='"Liberation Serif", serif' font-weight="normal" >2019</text>
<path d="M750.3 712.5 L874.2 663.2 L997.7 606.2 L1121.3 561.6" fill="none" stroke="#1f6c8c" stroke-width="2.6" stroke-linejoin="round"/>
<circle cx="750.3" cy="712.5" r="4" fill="#1f6c8c"/>
<circle cx="874.2" cy="663.2" r="4" fill="#1f6c8c"/>
<circle cx="997.7" cy="606.2" r="4" fill="#1f6c8c"/>
<circle cx="1121.3" cy="561.6" r="4" fill="#1f6c8c"/>
<text x="920.5" y="294" font-size="16" fill="#222222" text-anchor="middle" font-family='"Liberation Serif", serif' font-weight="normal" textLength="225" lengthAdjust="spacingAndGlyphs" >Electricity Unit Consumed by City</text>
<defs><clipPath id="mapclip"><rect x="725.5" y="302" width="390.5" height="177"/></clipPath></defs>
<g clip-path="url(#mapclip)">
<rect x="725.5" y="302" width="390.5" height="177" fill="#abc7f0"/>
<path d="M786 300 L1056 300 L1077 300 L1075 311 L1068 318 L1080 319 L1098 322 L1092 330 L1070 341 L1064 336 L1062 333 L1046 345 L1047 355 L1037 356 L1030 363 L1022 382 L1020 390 L1011 400 L999 409 L992 419 L997 435 L997 452 L987 436 L983 425 L970 423 L954.5 428 L943 429 L932 426 L925 430.5 L914.6 441 L913 450 L912 464.5 L916 481 L877 481 L873 467 L863 454 L852.6 442 L842 429 L834.5 419 L828 415 L831 422 L838 434.5 L847.5 447.5 L854 463 L847.5 458 L841 447.5 L832 441 L830.7 432 L824 424 L819 414 L812.6 407.4 L802 398 L796 388 L784 370 L781 349 L784 320 Z" fill="#ecece9"/>
<path d="M1102 300 L1118 300 L1118 313 L1108 312 L1103 307 Z" fill="#ecece9"/>
<path d="M945 481 L950 474 L962 472 L968 481 Z" fill="#ecece9"/>
<path d="M981 467 L1000 464 L1020 470 L1032 478 L1018 476 L995 471 Z" fill="#ecece9"/>
<g fill="#abc7f0"><path d="M941 307 L958 304 L976 306 L972 312 L960 314 L948 320 L942 316 Z"/><path d="M963 324 L969 322 L973 334 L971 350 L966 352 L963 340 Z"/><path d="M981 322 L990 320 L997 333 L995 345 L988 340 L983 330 Z"/><path d="M983 350 L1000 345 L1004 348 L988 356 Z"/><path d="M1001 341 L1013 338 L1014 344 L1003 347 Z"/></g>
<path d="M990 351 L1004 345 L1017 340 L1030 334 L1045 320 L1056 302" fill="none" stroke="#abc7f0" stroke-width="2.2"/>
<g fill="none" stroke="#8a8a8a" stroke-width="0.7" stroke-dasharray="2.5 1.8" opacity="0.7"><path d="M790 324.5 H818 M817.3 302 V352 M790 352.4 H847.4 M847.4 331 V358.5 M847.4 331.2 H881.4 M881.4 302 V358.5 M847.4 358.5 H897 M881.4 325.4 H915 M881.4 345.4 H915 M832.4 352 V400 M802 352 V390 L832 410 M857 358.5 V417 M832.4 384.2 H926"/><path d="M886.4 384.2 V414 H870 M901 387 V400 H927.5 M927.5 384 V407 H945 M931 407 V421 M945 386 V421 M959 395 V423 M973 395 V421 M951 396.4 H1001.5 M959 420.5 H991 M973 396 L994.4 413.5 M926 386.5 H1012"/><path d="M915.4 302 V384 M915 325 H955 M915 345 H960 M915 365 H945 M945 345 V386 M960 352 V386 M985 356 V386 M960 365 H1000 M1000 360 V390 M1015 375 H1030 M1005 385 L1025 378"/><path d="M1020 350 L1040 345 M1010 362 H1040 M1050 330 V348 M1034 335 V352"/></g>
<path d="M935 302.5 L950 318 L965 325 L982 330 L985 352 L1000 346 L1014 341 L1025 331 L1040 331 L1045 328 L1052 315 L1056 314 L1060 318 L1064 332" fill="none" stroke="#8c8c8c" stroke-width="1.1"/>
<path d="M817 410.5 L828 410 L847.5 416.5 L860 417 L870.7 416.5 L879.7 426.8 L885 430.7 L891.4 426.8 L900 434.5 L905 443 L915 448" fill="none" stroke="#8c8c8c" stroke-width="1.1"/>
<text x="900" y="369" font-size="10.5" font-weight="bold" fill="#222" text-anchor="middle" font-family='"Liberation Sans", sans-serif' textLength="83" lengthAdjust="spacingAndGlyphs">UNITED STATES</text>
<text x="933" y="449.5" font-size="9.5" fill="#5a7cc0" text-anchor="start" font-family='"Liberation Sans", sans-serif' font-weight="normal" textLength="29" lengthAdjust="spacingAndGlyphs" >Gulf of</text>
<text x="933" y="459.5" font-size="9.5" fill="#5a7cc0" text-anchor="start" font-family='"Liberation Sans", sans-serif' font-weight="normal" textLength="30" lengthAdjust="spacingAndGlyphs" >Mexico</text>
<text x="1069.5" y="438.5" font-size="8.5" fill="#5a7cc0" text-anchor="start" font-family='"Liberation Sans", sans-serif' font-weight="normal" textLength="48" lengthAdjust="spacingAndGlyphs" >Sargasso Sea</text>
<rect x="729.5" y="462.5" width="4" height="4" fill="#f25022" opacity="0.8"/>
<rect x="734.0" y="462.5" width="4" height="4" fill="#7fba00" opacity="0.8"/>
<rect x="729.5" y="467.0" width="4" height="4" fill="#00a4ef" opacity="0.8"/>
<rect x="734.0" y="467.0" width="4" height="4" fill="#ffb900" opacity="0.8"/>
<text x="740" y="470" font-size="7.5" fill="#777777" text-anchor="start" font-family='"Liberation Sans", sans-serif' font-weight="normal" textLength="45" lengthAdjust="spacingAndGlyphs" >Microsoft Bing</text>
<text x="836" y="471" font-size="8" fill="#333333" text-anchor="start" font-family='"Liberation Sans", sans-serif' font-weight="normal" textLength="231" lengthAdjust="spacingAndGlyphs" >© 2024 TomTom, © 2024 Microsoft Corporation, © OpenStreetMap</text>
<text x="882" y="470.5" font-size="8" fill="#333333" text-anchor="start" font-family='"Liberation Sans", sans-serif' font-weight="bold" textLength="30" lengthAdjust="spacingAndGlyphs" >MEXICO</text>
<text x="1073" y="471" font-size="8" fill="#333333" text-anchor="start" font-family='"Liberation Sans", sans-serif' font-weight="normal" textLength="21" lengthAdjust="spacingAndGlyphs" >Terms</text>
<path d="M1012 473.5 H1067 M1073 473.5 H1094" stroke="#333" stroke-width="0.6"/>
<circle cx="963" cy="353.3" r="6.8" fill="#4b7f96" fill-opacity="0.85" stroke="#1c4254" stroke-width="1"/>
<circle cx="1029.9" cy="361" r="6.8" fill="#4b7f96" fill-opacity="0.85" stroke="#1c4254" stroke-width="1"/>
<circle cx="811.9" cy="402.3" r="7" fill="#4b7f96" fill-opacity="0.85" stroke="#1c4254" stroke-width="1"/>
<circle cx="842.2" cy="405.9" r="4.6" fill="#4b7f96" fill-opacity="0.85" stroke="#1c4254" stroke-width="1"/>
<circle cx="924.5" cy="427.2" r="4.6" fill="#4b7f96" fill-opacity="0.85" stroke="#1c4254" stroke-width="1"/>
</g>
<path d="M119.5 382 V358.5 Q119.5 354.5 122.5 352 L145 331.5 Q150 327 155 331.5 L177.5 352 Q180.5 354.5 180.5 358.5 V382 Q180.5 388 174.5 388 H125.5 Q119.5 388 119.5 382 Z" fill="none" stroke="#b9b4b4" stroke-width="5.6" stroke-linejoin="round"/>
<rect x="149.5" y="352.5" width="17" height="16.5" rx="4.5" fill="none" stroke="#b9b4b4" stroke-width="5.6"/>
<circle cx="149.8" cy="450.2" r="33" fill="none" stroke="#b9b4b4" stroke-width="4.8"/>
<rect x="137.5" y="434.5" width="25" height="41" rx="5" fill="none" stroke="#b9b4b4" stroke-width="4.6"/>
<path d="M145 434 V428.5 Q145 426.5 147 426.5 H153 Q155 426.5 155 428.5 V434" fill="none" stroke="#b9b4b4" stroke-width="3.6"/>
<path d="M150 445.5 Q156 450 155.5 455 Q155 460 150 461 Q145 460 144.5 455 Q144 450 150 445.5 Z" fill="none" stroke="#b9b4b4" stroke-width="3.6"/>
<path d="M150 461 V476" stroke="#b9b4b4" stroke-width="3.6"/>
<rect x="105" y="506.5" width="89.5" height="83.5" rx="21" fill="#1f6c8c"/>
<g fill="none" stroke="#ffffff" stroke-width="1.9" stroke-linejoin="round" stroke-linecap="round"><path d="M129.84 518.75 A34.3 34.3 0 0 1 184.30 546.50 A2.25 2.25 0 0 1 179.80 546.50 A29.8 29.8 0 0 0 132.48 522.39"/><path d="M120.20 546.50 A2.25 2.25 0 0 0 115.70 546.50 A34.3 34.3 0 0 0 171.12 573.53 M168.35 569.98 A29.8 29.8 0 0 1 120.20 546.50"/><path d="M152 528 L138.5 548 L147 548 L148 564 L161.5 544 L153 544 Z"/></g>
<g fill="#1f6c8c" stroke="#ffffff" stroke-width="1.9" stroke-linejoin="round" stroke-linecap="round"><g transform="translate(127,525) rotate(45)"><rect x="-5.5" y="-4.5" width="11" height="9" rx="1"/><path d="M-3 4.5 V9 M3 4.5 V9"/></g><g transform="translate(173,566.5) rotate(45)"><rect x="-5.5" y="-4.5" width="11" height="9" rx="1"/><path d="M-3 -4.5 V-9 M3 -4.5 V-9"/></g></g>
<g fill="none" stroke="#b9b4b4" stroke-width="2.5" stroke-linecap="round" stroke-linejoin="round"><path d="M150 610 L136 630 A17 17 0 1 0 164 630 Z"/><path d="M162 641.5 Q160.5 647 155 649.5"/><path d="M162 635.3 L162 635.6"/><path d="M174.5 602 L166.5 612 A10 10 0 1 0 182.5 612 Z"/><path d="M179 617.5 Q178 621 174.5 622"/><path d="M125.7 643.5 L118 653 A9.7 9.7 0 1 0 133.4 653 Z"/><path d="M130.2 658 Q129.5 661.5 125.5 662.5"/><path d="M116.8 639.5 A33.7 33.7 0 0 1 166 606"/><path d="M161 602.5 L166 606 L162 609"/><path d="M183.2 630.5 A33.7 33.7 0 0 1 136 666.5"/><path d="M140.5 663 L136 666.5 L139 670"/></g>
<path d="M67 161 V785 H1179 V160" fill="none" stroke="#444444" stroke-width="2" stroke-dasharray="2 2"/>
<g fill="none" stroke="#242424" stroke-width="1.1"><path d="M14.5 173 V186.5 H28"/><rect x="16.5" y="178.5" width="2.5" height="6.5"/><rect x="20.5" y="175.5" width="2.5" height="9.5"/><rect x="24.5" y="177.5" width="2.5" height="7.5"/></g>
<g fill="none" stroke="#616161" stroke-width="1.1"><rect x="13.5" y="212.5" width="15" height="15"/><path d="M13.5 217.5 H28.5 M13.5 222.5 H28.5 M18.5 212.5 V227.5 M23.5 212.5 V227.5"/></g>
<g fill="none" stroke="#616161" stroke-width="1.1"><rect x="12.5" y="255.5" width="6" height="6"/><rect x="21.5" y="251.5" width="7" height="6"/><rect x="21.5" y="259.5" width="7" height="6"/><path d="M18.5 258.5 H21.5 M14.5 261.5 V266 H21"/></g>
<g fill="none" stroke="#616161" stroke-width="1"><path d="M14.5 301 V293.5 H22 L26 297.5 V302"/><path d="M22 293.5 V297.5 H26"/></g>
<text x="11.5" y="306.5" font-size="7" fill="#616161" text-anchor="start" font-family='"Liberation Sans", sans-serif' font-weight="normal" textLength="15" lengthAdjust="spacingAndGlyphs" >DAX</text>
<path d="M1228 173.5 L1223 178.5 L1228 183.5 M1223 173.5 L1218 178.5 L1223 183.5" fill="none" stroke="#242424" stroke-width="1.1"/>
<path d="M1229.5 201.5 V213.5 L1223 207.5 Z M1223 207.5 H1218.5" fill="none" stroke="#242424" stroke-width="1.2" stroke-linejoin="round"/>
<text x="0" y="0" font-size="14" fill="#242424" font-family='"Liberation Sans", sans-serif' transform="translate(1217.5,222) rotate(90)" textLength="43" lengthAdjust="spacingAndGlyphs">Filters</text>
<text x="1247.5" y="184.5" font-size="15" fill="#242424" text-anchor="start" font-family='"Liberation Sans", sans-serif' font-weight="bold" textLength="98" lengthAdjust="spacingAndGlyphs" >Visualizations</text>
<path d="M1399 173.5 L1404 178.5 L1399 183.5 M1404 173.5 L1409 178.5 L1404 183.5" fill="none" stroke="#242424" stroke-width="1.1"/>
<text x="1247.5" y="209.5" font-size="12" fill="#242424" text-anchor="start" font-family='"Liberation Sans", sans-serif' font-weight="bold" textLength="62" lengthAdjust="spacingAndGlyphs" >Build visual</text>
<rect x="1247" y="217" width="32" height="31.5" rx="2" fill="#d9d8d7"/>
<rect x="1251" y="221" width="19" height="1.4" fill="#242424"/>
<rect x="1251.5" y="225.5" width="23" height="8" fill="#117865" stroke="#242424" stroke-width="1" stroke-dasharray="1.5 1"/>
<rect x="1251.5" y="236.5" width="23" height="8" fill="#117865" stroke="#242424" stroke-width="1" stroke-dasharray="1.5 1"/>
<g fill="none" stroke="#242424" stroke-width="1.1"><path d="M1325 245 H1317.5 V221.5 H1327 L1334 228.5 V232"/><path d="M1327 221.5 V228.5 H1334"/><path d="M1340.5 229 L1329 240.5"/><path d="M1329 240.5 Q1325 240 1324.5 244 Q1328 245.5 1330.5 242.5 Z"/></g>
<path d="M1239 261.5 H1255.5 L1262 255 L1268.5 261.5 H1419" fill="none" stroke="#bdbbb9" stroke-width="1"/>
<path d="M1256.5 261 L1262 255.7 L1267.5 261 Z" fill="#f3f2f1"/>
<rect x="1239" y="496" width="180" height="1" fill="#d6d4d2"/>
<g transform="translate(1247.8,271.1)"><path d="M2.5 2 V20.5" stroke="#424242"/><rect x="3" y="4" width="9" height="4" fill="#6fa8e8" stroke="#2a7ad4" stroke-width="0.8"/><rect x="3" y="10" width="15" height="4" fill="none" stroke="#424242" stroke-width="0.9"/><rect x="3" y="15.5" width="11" height="4" fill="#c8c6c4" stroke="#8a8886" stroke-width="0.8"/><path d="M2.5 20.5 H20" stroke="#424242"/></g>
<g transform="translate(1275.9,271.1)"><path d="M2.5 2 V20.5 H21" fill="none" stroke="#424242" stroke-width="1"/><rect x="5" y="11" width="3.5" height="9" fill="none" stroke="#424242" stroke-width="0.9"/><rect x="10" y="6" width="3.5" height="14" fill="#6fa8e8" stroke="#2a7ad4" stroke-width="0.8"/><rect x="15" y="4" width="3.5" height="16" fill="#c8c6c4" stroke="#8a8886" stroke-width="0.8"/></g>
<g transform="translate(1303.6,271.1)"><path d="M2.5 2 V20.5" stroke="#424242"/><rect x="3" y="3" width="17" height="4" fill="#6fa8e8" stroke="#2a7ad4" stroke-width="0.8"/><rect x="3" y="8.5" width="10" height="4" fill="none" stroke="#424242" stroke-width="0.9"/><rect x="3" y="14" width="13" height="4" fill="#c8c6c4" stroke="#8a8886" stroke-width="0.8"/><path d="M2 20.5 H20" stroke="#8a8886" stroke-width="1.5"/></g>
<g transform="translate(1331.7,271.1)"><rect x="3" y="3" width="4" height="17" fill="#6fa8e8" stroke="#2a7ad4" stroke-width="0.8"/><rect x="8.5" y="8" width="4" height="12" fill="none" stroke="#424242" stroke-width="0.9"/><rect x="14" y="11" width="4" height="9" fill="#c8c6c4" stroke="#8a8886" stroke-width="0.8"/><path d="M2 20.5 H21" stroke="#424242"/></g>
<g transform="translate(1359.8,271.1)"><path d="M2.5 2 V20.5" stroke="#424242"/><rect x="3" y="4" width="16" height="4" fill="#6fa8e8" stroke="#2a7ad4" stroke-width="0.8"/><rect x="3" y="10" width="16" height="4" fill="#c8c6c4" stroke="#8a8886" stroke-width="0.8"/><rect x="3" y="16" width="16" height="4" fill="none" stroke="#424242" stroke-width="0.9"/></g>
<g transform="translate(1387.9,271.1)"><path d="M2.5 2 V20.5 H21" fill="none" stroke="#424242" stroke-width="1"/><rect x="5" y="4" width="4" height="16" fill="#6fa8e8" stroke="#2a7ad4" stroke-width="0.8"/><rect x="10.5" y="4" width="3" height="16" fill="none" stroke="#424242" stroke-width="0.9"/><rect x="15" y="4" width="4" height="16" fill="#c8c6c4" stroke="#8a8886" stroke-width="0.8"/></g>
<g transform="translate(1247.8,298.8)"><path d="M2.5 2 V20.5 H21" fill="none" stroke="#424242" stroke-width="1"/><path d="M3 15 L8 9 L12 13 L18 7 L21 9" fill="none" stroke="#2a7ad4" stroke-width="1.1"/><path d="M3 11 L8 13 L12 8 L18 11" fill="none" stroke="#424242" stroke-width="1"/></g>
<g transform="translate(1275.9,298.8)"><path d="M2 20.5 L8 9 L12 15 L17 4 L21 20.5 Z" fill="#c8c6c4" stroke="#8a8886" stroke-width="0.8"/><path d="M2 20.5 L8 11 L13 20.5 Z" fill="#6fa8e8" stroke="#2a7ad4" stroke-width="0.8"/><path d="M2 20.5 H21" stroke="#424242"/></g>
<g transform="translate(1303.6,298.8)"><path d="M2.5 2 V20.5 H21" fill="none" stroke="#424242" stroke-width="1"/><path d="M3 6 L8 14 L13 8 L18 15 L21 9 V20 H3 Z" fill="#6fa8e8" opacity="0.6"/><path d="M3 6 L8 14 L13 8 L18 15 L21 9" fill="none" stroke="#2a7ad4" stroke-width="1.2"/></g>
<g transform="translate(1331.7,298.8)"><path d="M2.5 2 V20.5 H21" fill="none" stroke="#424242" stroke-width="1"/><path d="M3 4 H21 V20 H3 Z" fill="#6fa8e8"/><path d="M3 4 L11 14 L21 4" fill="#f3f2f1" stroke="#2a7ad4" stroke-width="1"/></g>
<g transform="translate(1359.8,298.8)"><path d="M2.5 2 V20.5 H21" fill="none" stroke="#424242" stroke-width="1"/><rect x="5" y="6" width="4" height="14" fill="#6fa8e8" stroke="#2a7ad4" stroke-width="0.7"/><rect x="13" y="9" width="4" height="11" fill="#c8c6c4" stroke="#8a8886" stroke-width="0.7"/><path d="M3 18 L9 11 L13 15 L20 7" fill="none" stroke="#424242" stroke-width="1"/></g>
<g transform="translate(1387.9,298.8)"><path d="M2.5 2 V20.5 H21" fill="none" stroke="#424242" stroke-width="1"/><rect x="5" y="10" width="4" height="10" fill="#6fa8e8" stroke="#2a7ad4" stroke-width="0.7"/><rect x="13" y="6" width="4" height="14" fill="#c8c6c4" stroke="#8a8886" stroke-width="0.7"/><path d="M3 17 L9 13 L13 16 L20 8" fill="none" stroke="#424242" stroke-width="1"/></g>
<g transform="translate(1247.8,326.7)"><path d="M2.5 2 V20.5 H21" fill="none" stroke="#424242" stroke-width="1"/><path d="M3 4 Q8 10 11 7 Q15 4 21 6 V20 H3 Z" fill="#6fa8e8"/><path d="M3 9 Q8 15 11 12 Q15 9 21 11 V16 Q15 14 11 17 Q7 20 3 15 Z" fill="#f0a33a"/><path d="M3 7 Q8 13 11 10 Q15 7 21 9" fill="none" stroke="#424242" stroke-width="1"/></g>
<g transform="translate(1275.9,326.7)"><path d="M2.5 2 V20.5 H21" fill="none" stroke="#424242" stroke-width="1"/><path d="M5 20 V11 H8.5 V15 H11 V6 H14.5 V12 H17 V3 H20.5 V20" fill="none" stroke="#424242" stroke-width="1"/></g>
<g transform="translate(1303.6,326.7)"><rect x="2" y="3" width="19" height="5" fill="#6fa8e8" stroke="#2a7ad4" stroke-width="0.8"/><rect x="5" y="9.5" width="13" height="5" fill="#6fa8e8" stroke="#2a7ad4" stroke-width="0.8"/><rect x="8" y="16" width="7" height="4.5" fill="#6fa8e8" stroke="#2a7ad4" stroke-width="0.8"/></g>
<g transform="translate(1331.7,326.7)"><path d="M2.5 2 V20.5 H21" fill="none" stroke="#424242" stroke-width="1"/><rect x="7" y="10" width="2" height="2" fill="#6fa8e8"/><rect x="11" y="13" width="2" height="2" fill="#6fa8e8"/><rect x="15" y="8" width="2" height="2" fill="#6fa8e8"/><rect x="17" y="4" width="2.5" height="2.5" fill="#242424"/><rect x="6" y="16" width="2" height="2" fill="#424242"/><rect x="13" y="17" width="2" height="2" fill="#6fa8e8"/></g>
<g transform="translate(1359.8,326.7)"><circle cx="11.5" cy="11.5" r="9.5" fill="#fff" stroke="#424242" stroke-width="1"/><path d="M11.5 2 V11.5 L19 17.5 A9.5 9.5 0 0 0 11.5 2 Z" fill="#6fa8e8" stroke="#2a7ad4" stroke-width="0.9"/></g>
<g transform="translate(1387.9,326.7)"><circle cx="11.5" cy="11.5" r="8.5" fill="none" stroke="#6fa8e8" stroke-width="4"/><path d="M11.5 3 A8.5 8.5 0 0 1 19.5 14" fill="none" stroke="#2a7ad4" stroke-width="4"/><circle cx="11.5" cy="11.5" r="5" fill="#f3f2f1"/></g>
<g transform="translate(1247.8,354.4)"><rect x="2" y="2" width="9" height="19" fill="#6fa8e8" stroke="#2a7ad4" stroke-width="0.8"/><rect x="11" y="2" width="10" height="9" fill="none" stroke="#424242" stroke-width="0.9"/><rect x="11" y="11" width="5" height="10" fill="none" stroke="#424242" stroke-width="0.9"/><rect x="16" y="11" width="5" height="10" fill="#6fa8e8" stroke="#2a7ad4" stroke-width="0.8"/></g>
<g transform="translate(1275.9,354.4)"><circle cx="11.5" cy="10" r="7" fill="#fff" stroke="#424242" stroke-width="1"/><path d="M7.5 6 Q10 7 9.5 10 Q8 12 9 14 L7 13 Q5 10 7.5 6 Z M13 5 Q16 6 17 9 Q15 11 13 9 Z M12 13 Q15 12 16 14 Q14 16.5 12 16 Z" fill="#2e8b57"/><path d="M4 15 Q11.5 22 19 15 M11.5 18 V21 M8 21.5 H15" fill="none" stroke="#424242" stroke-width="1"/></g>
<g transform="translate(1303.6,354.4)"><path d="M2 5 L7 3 L12 5 L17 4 L21 6 L20 13 L15 19 L10 17 L6 20 L3 14 Z" fill="#c8c6c4" stroke="#424242" stroke-width="0.9"/><path d="M12 5 L12 12 L20 13 L21 6 L17 4 Z" fill="#6fa8e8" stroke="#2a7ad4" stroke-width="0.8"/></g>
<g transform="translate(1331.7,354.4)"><path d="M2 5 L7 3 L12 5 L17 4 L21 6 L20 13 L15 19 L10 17 L6 20 L3 14 Z" fill="#fff" stroke="#424242" stroke-width="0.9"/><path d="M12 5 L12 12 L20 13 M7 3 V10 L3 14 M10 17 L12 12" fill="none" stroke="#2a7ad4" stroke-width="0.9"/></g>
<g transform="translate(1359.8,354.4)"><path d="M11.5 2 L20 21 L11.5 16 L3 21 Z" fill="#6fa8e8" stroke="#2a7ad4" stroke-width="0.8"/><path d="M11.5 2 L11.5 16 L3 21 Z" fill="#2a7ad4"/></g>
<g transform="translate(1387.9,354.4)"><path d="M2.5 16.5 A9 9 0 0 1 20.5 16.5" fill="none" stroke="#424242" stroke-width="1"/><path d="M5.5 16.5 A6 6 0 0 1 8 11.5 L6 9 A9 9 0 0 0 2.5 16.5 Z" fill="#fff" stroke="#424242" stroke-width="0.8"/><path d="M8.5 9.5 A9 9 0 0 1 20.5 16.5 H17.5 A6 6 0 0 0 10 12 Z" fill="#6fa8e8" stroke="#2a7ad4" stroke-width="0.8"/><path d="M11 16.5 L15 12" stroke="#424242" stroke-width="1.4"/></g>
<g transform="translate(1247.8,382.6)"><rect x="2" y="5" width="19" height="13" fill="#fff" stroke="#424242" stroke-width="0.9"/><text x="11.5" y="15" font-size="7.5" fill="#2a7ad4" text-anchor="middle" font-family='"Liberation Sans", sans-serif'>123</text></g>
<g transform="translate(1275.9,382.6)"><rect x="3" y="3" width="17" height="17" fill="#fff" stroke="#424242" stroke-width="0.9"/><path d="M6 7.5 H17 M6 11.5 H15 M6 15.5 H17" stroke="#2a7ad4" stroke-width="1.3"/></g>
<g transform="translate(1303.6,382.6)"><rect x="2" y="4" width="19" height="15" fill="#fff" stroke="#424242" stroke-width="0.9"/><path d="M5 13 L8 8 L11 13 Z" fill="#2e8b57"/><path d="M12 8 H18 L15 13 Z" fill="#e05050"/><path d="M4 16 H19" stroke="#424242"/></g>
<g transform="translate(1331.7,382.6)"><rect x="2" y="3" width="17" height="17" fill="#fff" stroke="#424242" stroke-width="0.9"/><path d="M2 7 H19" stroke="#424242"/><path d="M11 12 H21 L17.5 16 V21 L14.5 19.5 V16 Z" fill="#fff" stroke="#424242" stroke-width="0.9"/><rect x="5" y="10" width="3" height="2.5" fill="none" stroke="#424242" stroke-width="0.7"/><rect x="5" y="15" width="3" height="2.5" fill="none" stroke="#424242" stroke-width="0.7"/></g>
<g transform="translate(1359.8,382.6)"><rect x="2" y="3" width="19" height="17" fill="#fff" stroke="#424242" stroke-width="0.9"/><path d="M2 7.5 H21 M2 11.5 H21 M2 15.5 H21 M8.5 7.5 V20 M14.5 7.5 V20" stroke="#424242" stroke-width="0.8"/><rect x="2" y="3" width="19" height="1.8" fill="#8a8886"/></g>
<g transform="translate(1387.9,382.6)"><rect x="2" y="3" width="19" height="17" fill="#fff" stroke="#424242" stroke-width="0.9"/><rect x="14.5" y="7.5" width="6.5" height="12.5" fill="#6fa8e8"/><rect x="2" y="15.5" width="19" height="4.5" fill="#6fa8e8"/><path d="M2 7.5 H21 M2 11.5 H21 M2 15.5 H21 M8.5 7.5 V20 M14.5 7.5 V20" stroke="#424242" stroke-width="0.8"/><path d="M14.5 11.5 H21 M2 15.5 H21 M8.5 15.5 V20 M14.5 15.5 V20" stroke="#2a7ad4" stroke-width="0.8"/><rect x="2" y="3" width="19" height="1.8" fill="#8a8886"/></g>
<g transform="translate(1247.8,410.7)"><text x="11.5" y="17.5" font-size="15" font-weight="bold" fill="#2a7ad4" text-anchor="middle" font-family='"Liberation Sans", sans-serif'>R</text></g>
<g transform="translate(1275.9,410.7)"><text x="11.5" y="17" font-size="14" font-weight="bold" fill="#2a7ad4" text-anchor="middle" font-family='"Liberation Sans", sans-serif' textLength="21" lengthAdjust="spacingAndGlyphs">Py</text></g>
<g transform="translate(1303.6,410.7)"><path d="M2.5 2 V21" stroke="#424242"/><path d="M2.5 6 H14 M6 11 H12 M6 16 H10" stroke="#424242" stroke-width="0.9"/><circle cx="17" cy="5.5" r="2.3" fill="#6fa8e8" stroke="#2a7ad4" stroke-width="0.8"/><rect x="12" y="9.5" width="3" height="3" fill="#c8c6c4"/><rect x="9" y="14.5" width="3" height="3" fill="#c8c6c4"/></g>
<g transform="translate(1331.7,410.7)"><rect x="2" y="9" width="6" height="5" fill="#6fa8e8" stroke="#2a7ad4" stroke-width="0.8"/><rect x="14" y="3" width="7" height="4.5" fill="#6fa8e8" stroke="#2a7ad4" stroke-width="0.8"/><rect x="14" y="9.5" width="7" height="4.5" fill="#6fa8e8" stroke="#2a7ad4" stroke-width="0.8"/><rect x="14" y="16" width="7" height="4.5" fill="#6fa8e8" stroke="#2a7ad4" stroke-width="0.8"/><path d="M8 11.5 H11 V5 H14 M11 11.5 H14 M11 11.5 V18 H14" fill="none" stroke="#424242" stroke-width="0.9"/></g>
<g transform="translate(1359.8,410.7)"><path d="M2.5 3.5 H20.5 V15.5 H9 L5 19.5 V15.5 H2.5 Z" fill="#fff" stroke="#2a7ad4" stroke-width="1.1" stroke-linejoin="round"/></g>
<g transform="translate(1387.9,410.7)"><path d="M4.5 2.5 H14 L19 7.5 V20.5 H4.5 Z" fill="#fff" stroke="#424242" stroke-width="0.9"/><path d="M14 2.5 V7.5 H19" fill="none" stroke="#424242" stroke-width="0.9"/><path d="M7 11 H9 M10.5 11 H16 M7 14.5 H16" stroke="#2a7ad4" stroke-width="1.1"/></g>
<g transform="translate(1247.8,438.8)"><path d="M5 3 H18 V9 Q18 14 11.5 14.5 Q5 14 5 9 Z" fill="#fff" stroke="#424242" stroke-width="1.1"/><path d="M5 5 H2.5 Q2.5 10 5.5 10.5 M18 5 H20.5 Q20.5 10 17.5 10.5" fill="none" stroke="#424242" stroke-width="1"/><path d="M11.5 14.5 V18 M7 20 H16 V18 H7 Z" fill="#2a7ad4" stroke="#424242" stroke-width="0.9"/></g>
<g transform="translate(1275.9,438.8)"><path d="M4.5 2.5 H14 L19 7.5 V20.5 H4.5 Z" fill="#fff" stroke="#424242" stroke-width="0.9"/><path d="M14 2.5 V7.5 H19" fill="none" stroke="#424242" stroke-width="0.9"/><rect x="7" y="14" width="2.5" height="5" fill="#424242"/><rect x="10.5" y="11" width="2.5" height="8" fill="#424242"/><rect x="14" y="12.5" width="2.5" height="6.5" fill="#424242"/></g>
<g transform="translate(1303.6,438.8)"><rect x="4" y="7" width="17" height="12" fill="#fff" stroke="#424242" stroke-width="0.9"/><text x="12.5" y="16.5" font-size="7.5" fill="#2a7ad4" text-anchor="middle" font-family='"Liberation Sans", sans-serif'>123</text><path d="M5 1 L9.5 1 L7 5.5 L9.5 5.5 L3 12 L5 7 L2.5 7 Z" fill="#f0a33a"/></g>
<g transform="translate(1331.7,438.8)"><rect x="4" y="4" width="15" height="16" fill="#fff" stroke="#424242" stroke-width="0.9"/><path d="M4 8 H19" stroke="#424242"/><path d="M11 12 H21 L17.5 16 V21 L14.5 19.5 V16 Z" fill="#fff" stroke="#424242" stroke-width="0.9"/><path d="M5 1 L9.5 1 L7 5.5 L9.5 5.5 L3 12 L5 7 L2.5 7 Z" fill="#f0a33a"/></g>
<g transform="translate(1359.8,438.8)"><rect x="3.5" y="3.5" width="17" height="16.5" fill="#fff" stroke="#2a7ad4" stroke-width="1.1"/><path d="M7 20 L9 16 Q12 14 12 11 Q13 8 17 7 L20 6 V12 Q17 13 15 16 Q14 19 12 20 Z" fill="#6fa8e8" stroke="#2a7ad4" stroke-width="0.8"/><path d="M2 1 H7 V7 L4.5 9.5 L2 7 Z" fill="#d88a2a"/><circle cx="4.5" cy="4" r="1" fill="#fff"/><circle cx="18.5" cy="18.5" r="2.5" fill="#d88a2a"/><rect x="20" y="11.5" width="2" height="2" fill="#d88a2a"/></g>
<g transform="translate(1387.9,438.8)"><path d="M11.5 2.5 L20.5 11.5 L11.5 20.5 L2.5 11.5 Z" fill="none" stroke="#9b50c8" stroke-width="1.2" stroke-linejoin="round"/><path d="M7 7 L16 16 M16 7 L7 16" fill="none" stroke="#9b50c8" stroke-width="1.1"/></g>
<g transform="translate(1247.8,466)"><path d="M2 4 H12 L20 11.5 L12 19 H2 L9.5 11.5 Z" fill="#fff" stroke="#2a7ad4" stroke-width="1.1" stroke-linejoin="round"/><path d="M6.5 19 L14 11.5" fill="none" stroke="#2a7ad4" stroke-width="1.1"/></g>
<g fill="#424242"><circle cx="1281" cy="477" r="1"/><circle cx="1287" cy="477" r="1"/><circle cx="1293" cy="477" r="1"/></g>
<text x="1251" y="518" font-size="12" fill="#242424" text-anchor="start" font-family='"Liberation Sans", sans-serif' font-weight="normal" textLength="33.5" lengthAdjust="spacingAndGlyphs" >Values</text>
<rect x="1243.5" y="527.5" width="169" height="26.5" rx="2" fill="#ffffff" stroke="#c8c6c4" stroke-width="1" stroke-dasharray="2 2"/>
<text x="1254" y="545.5" font-size="12" fill="#242424" text-anchor="start" font-family='"Liberation Sans", sans-serif' font-weight="normal" textLength="107" lengthAdjust="spacingAndGlyphs" >Add data fields here</text>
<text x="1251" y="578" font-size="12" fill="#242424" text-anchor="start" font-family='"Liberation Sans", sans-serif' font-weight="bold" textLength="69.5" lengthAdjust="spacingAndGlyphs" >Drill through</text>
<text x="1251" y="603" font-size="12" fill="#242424" text-anchor="start" font-family='"Liberation Sans", sans-serif' font-weight="normal" textLength="66" lengthAdjust="spacingAndGlyphs" >Cross-report</text>
<rect x="1365.5" y="591.5" width="31" height="15" rx="7.5" fill="#ffffff" stroke="#616161" stroke-width="1"/>
<circle cx="1374" cy="599" r="4" fill="#424242"/>
<text x="1380" y="603" font-size="9" fill="#424242" text-anchor="start" font-family='"Liberation Sans", sans-serif' font-weight="normal" textLength="14" lengthAdjust="spacingAndGlyphs" >Off</text>
<text x="1251" y="630" font-size="12" fill="#242424" text-anchor="start" font-family='"Liberation Sans", sans-serif' font-weight="normal" textLength="74" lengthAdjust="spacingAndGlyphs" >Keep all filters</text>
<rect x="1365" y="618" width="32" height="16" rx="8" fill="#117865"/>
<circle cx="1389" cy="626" r="4" fill="#ffffff"/>
<text x="1369" y="630" font-size="9" fill="#ffffff" text-anchor="start" font-family='"Liberation Sans", sans-serif' font-weight="normal" textLength="11" lengthAdjust="spacingAndGlyphs" >On</text>
<rect x="1243.5" y="644.5" width="169" height="25.5" rx="2" fill="#ffffff" stroke="#c8c6c4" stroke-width="1" stroke-dasharray="2 2"/>
<text x="1252" y="662" font-size="12" fill="#242424" text-anchor="start" font-family='"Liberation Sans", sans-serif' font-weight="normal" textLength="151" lengthAdjust="spacingAndGlyphs" >Add drill-through fields here</text>
<text x="1428.5" y="184.5" font-size="15" fill="#242424" text-anchor="start" font-family='"Liberation Sans", sans-serif' font-weight="bold" textLength="32.5" lengthAdjust="spacingAndGlyphs" >Data</text>
<path d="M1580 173.5 L1585 178.5 L1580 183.5 M1585 173.5 L1590 178.5 L1585 183.5" fill="none" stroke="#242424" stroke-width="1.1"/>
<rect x="1425.5" y="205.5" width="169.5" height="23" rx="3" fill="#ffffff" stroke="#d1d1d1" stroke-width="1"/>
<rect x="1427" y="227.5" width="166.5" height="1" fill="#616161"/>
<g fill="none" stroke="#424242" stroke-width="1.2"><circle cx="1443.5" cy="215.5" r="5.2"/><path d="M1447.2 219.2 L1451 223"/></g>
<text x="1458.5" y="222.5" font-size="14" fill="#707070" text-anchor="start" font-family='"Liberation Sans", sans-serif' font-weight="normal" textLength="41" lengthAdjust="spacingAndGlyphs" >Search</text>
<path d="M1436.5 246.2 L1441 250.7 L1436.5 255.2" fill="none" stroke="#424242" stroke-width="1"/>
<g fill="none" stroke="#242424" stroke-width="1.1"><rect x="1449.5" y="245.2" width="11" height="11" rx="2.5"/><path d="M1449.5 248.89999999999998 H1460.5 M1449.5 252.5 H1460.5 M1453.2 245.2 V256.2 M1456.8 245.2 V256.2"/></g>
<text x="1467.5" y="255.0" font-size="12" fill="#323130" text-anchor="start" font-family='"Liberation Sans", sans-serif' font-weight="normal" textLength="83.5" lengthAdjust="spacingAndGlyphs" >Building Master</text>
<path d="M1436.5 270.3 L1441 274.8 L1436.5 279.3" fill="none" stroke="#424242" stroke-width="1"/>
<g fill="none" stroke="#242424" stroke-width="1.1"><rect x="1449.5" y="269.3" width="11" height="11" rx="2.5"/><path d="M1449.5 273.0 H1460.5 M1449.5 276.6 H1460.5 M1453.2 269.3 V280.3 M1456.8 269.3 V280.3"/></g>
<text x="1467.5" y="279.1" font-size="12" fill="#323130" text-anchor="start" font-family='"Liberation Sans", sans-serif' font-weight="normal" textLength="115.5" lengthAdjust="spacingAndGlyphs" >Energy Consumptions</text>
<path d="M1436.5 294.1 L1441 298.6 L1436.5 303.1" fill="none" stroke="#424242" stroke-width="1"/>
<g fill="none" stroke="#242424" stroke-width="1.1"><rect x="1449.5" y="293.1" width="11" height="11" rx="2.5"/><path d="M1449.5 296.8 H1460.5 M1449.5 300.40000000000003 H1460.5 M1453.2 293.1 V304.1 M1456.8 293.1 V304.1"/></g>
<text x="1467.5" y="302.90000000000003" font-size="12" fill="#323130" text-anchor="start" font-family='"Liberation Sans", sans-serif' font-weight="normal" textLength="28" lengthAdjust="spacingAndGlyphs" >Rates</text>
<defs><linearGradient id="shd" x1="0" y1="0" x2="0" y2="1"><stop offset="0" stop-color="#000" stop-opacity="0.10"/><stop offset="1" stop-color="#000" stop-opacity="0"/></linearGradient></defs>
<rect x="0" y="160" width="1600" height="4" fill="url(#shd)"/>
<g fill="none" stroke="#424242" stroke-width="1.1"><rect x="53.5" y="800.5" width="18" height="11.5" rx="1"/><path d="M62.5 812 V815.5 M58.5 815.5 H66.5"/></g>
<rect x="51" y="819" width="24" height="3" rx="1.5" fill="#117865"/>
<rect x="101.5" y="797.5" width="11" height="20" rx="1.5" fill="none" stroke="#424242" stroke-width="1.1"/>
<rect x="106" y="814" width="2" height="1.5" fill="#424242"/>
<path d="M139 806.5 L135.5 810 L139 813.5 Z M156.5 806.5 L160 810 L156.5 813.5 Z" fill="#c8c6c4"/>
<rect x="168" y="792" width="299.5" height="35" fill="#ffffff"/>
<rect x="168" y="792" width="1" height="35" fill="#e1dfdd"/>
<rect x="241.5" y="792" width="1" height="35" fill="#e1dfdd"/>
<rect x="302" y="792" width="1" height="35" fill="#e1dfdd"/>
<rect x="395.5" y="792" width="1" height="35" fill="#e1dfdd"/>
<rect x="302" y="823" width="93.5" height="4" fill="#117865"/>
<text x="205" y="815" font-size="13" fill="#242424" text-anchor="middle" font-family='"Liberation Sans", sans-serif' font-weight="normal" textLength="32" lengthAdjust="spacingAndGlyphs" >Home</text>
<text x="272" y="815" font-size="13" fill="#242424" text-anchor="middle" font-family='"Liberation Sans", sans-serif' font-weight="normal" textLength="19.5" lengthAdjust="spacingAndGlyphs" >Gas</text>
<text x="349" y="815" font-size="13" fill="#242424" text-anchor="middle" font-family='"Liberation Sans", sans-serif' font-weight="normal" textLength="52.5" lengthAdjust="spacingAndGlyphs" >Electricity</text>
<text x="388" y="806" font-size="11" fill="#242424" text-anchor="middle" font-family='"Liberation Sans", sans-serif' font-weight="normal" >x</text>
<text x="431.5" y="815" font-size="13" fill="#242424" text-anchor="middle" font-family='"Liberation Sans", sans-serif' font-weight="normal" textLength="31" lengthAdjust="spacingAndGlyphs" >Water</text>
<rect x="467.5" y="792" width="39.5" height="35" fill="#117865"/>
<path d="M487.4 803.5 V813.7 M482.3 808.6 H492.5" stroke="#ffffff" stroke-width="2.8"/>
<text x="6" y="845" font-size="12" fill="#323130" text-anchor="start" font-family='"Liberation Sans", sans-serif' font-weight="normal" textLength="58" lengthAdjust="spacingAndGlyphs" >Page 3 of 4</text>
<path d="M1387 839.5 H1392" stroke="#323130" stroke-width="1.2"/>
<rect x="1397" y="839" width="100" height="1" fill="#8a8886"/>
<rect x="1439" y="834" width="3.5" height="11" fill="#424242"/>
<rect x="1445" y="837" width="1" height="5" fill="#424242"/>
<path d="M1502.5 839.5 H1510 M1506.3 835.7 V843.3" stroke="#323130" stroke-width="1.2"/>
<text x="1523.5" y="845" font-size="12" fill="#323130" text-anchor="start" font-family='"Liberation Sans", sans-serif' font-weight="normal" textLength="23" lengthAdjust="spacingAndGlyphs" >87%</text>
<g fill="none" stroke="#424242" stroke-width="1.1"><rect x="1566.5" y="834.5" width="15" height="11"/><path d="M1569 838.5 V837 H1570.5 M1577.5 837 H1579 V838.5 M1579 841.5 V843 H1577.5 M1570.5 843 H1569 V841.5"/></g>
<g opacity="0.115"><text x="799.5" y="827.5" font-size="33" font-weight="bold" fill="#000" text-anchor="middle" font-family='"Liberation Sans", sans-serif' textLength="191" lengthAdjust="spacingAndGlyphs">mostaql.com</text></g>
<g opacity="0.115" fill="none" stroke="#000000" stroke-width="9" stroke-linecap="round" stroke-linejoin="round"><path d="M714 771 Q705 779 706 788 Q708 797 722 797 H877"/><path d="M736 752 V797"/><circle cx="768.5" cy="784" r="12"/><circle cx="877" cy="784" r="12.5"/><path d="M803 772 V797 M821 772 V797 M846.5 772 V797"/></g>
<g opacity="0.115" fill="#000000"><circle cx="762.5" cy="753.5" r="5"/><circle cx="774.5" cy="753.5" r="5"/><circle cx="795.5" cy="764" r="5"/><circle cx="808" cy="764" r="5"/></g>
</svg></body></html>
